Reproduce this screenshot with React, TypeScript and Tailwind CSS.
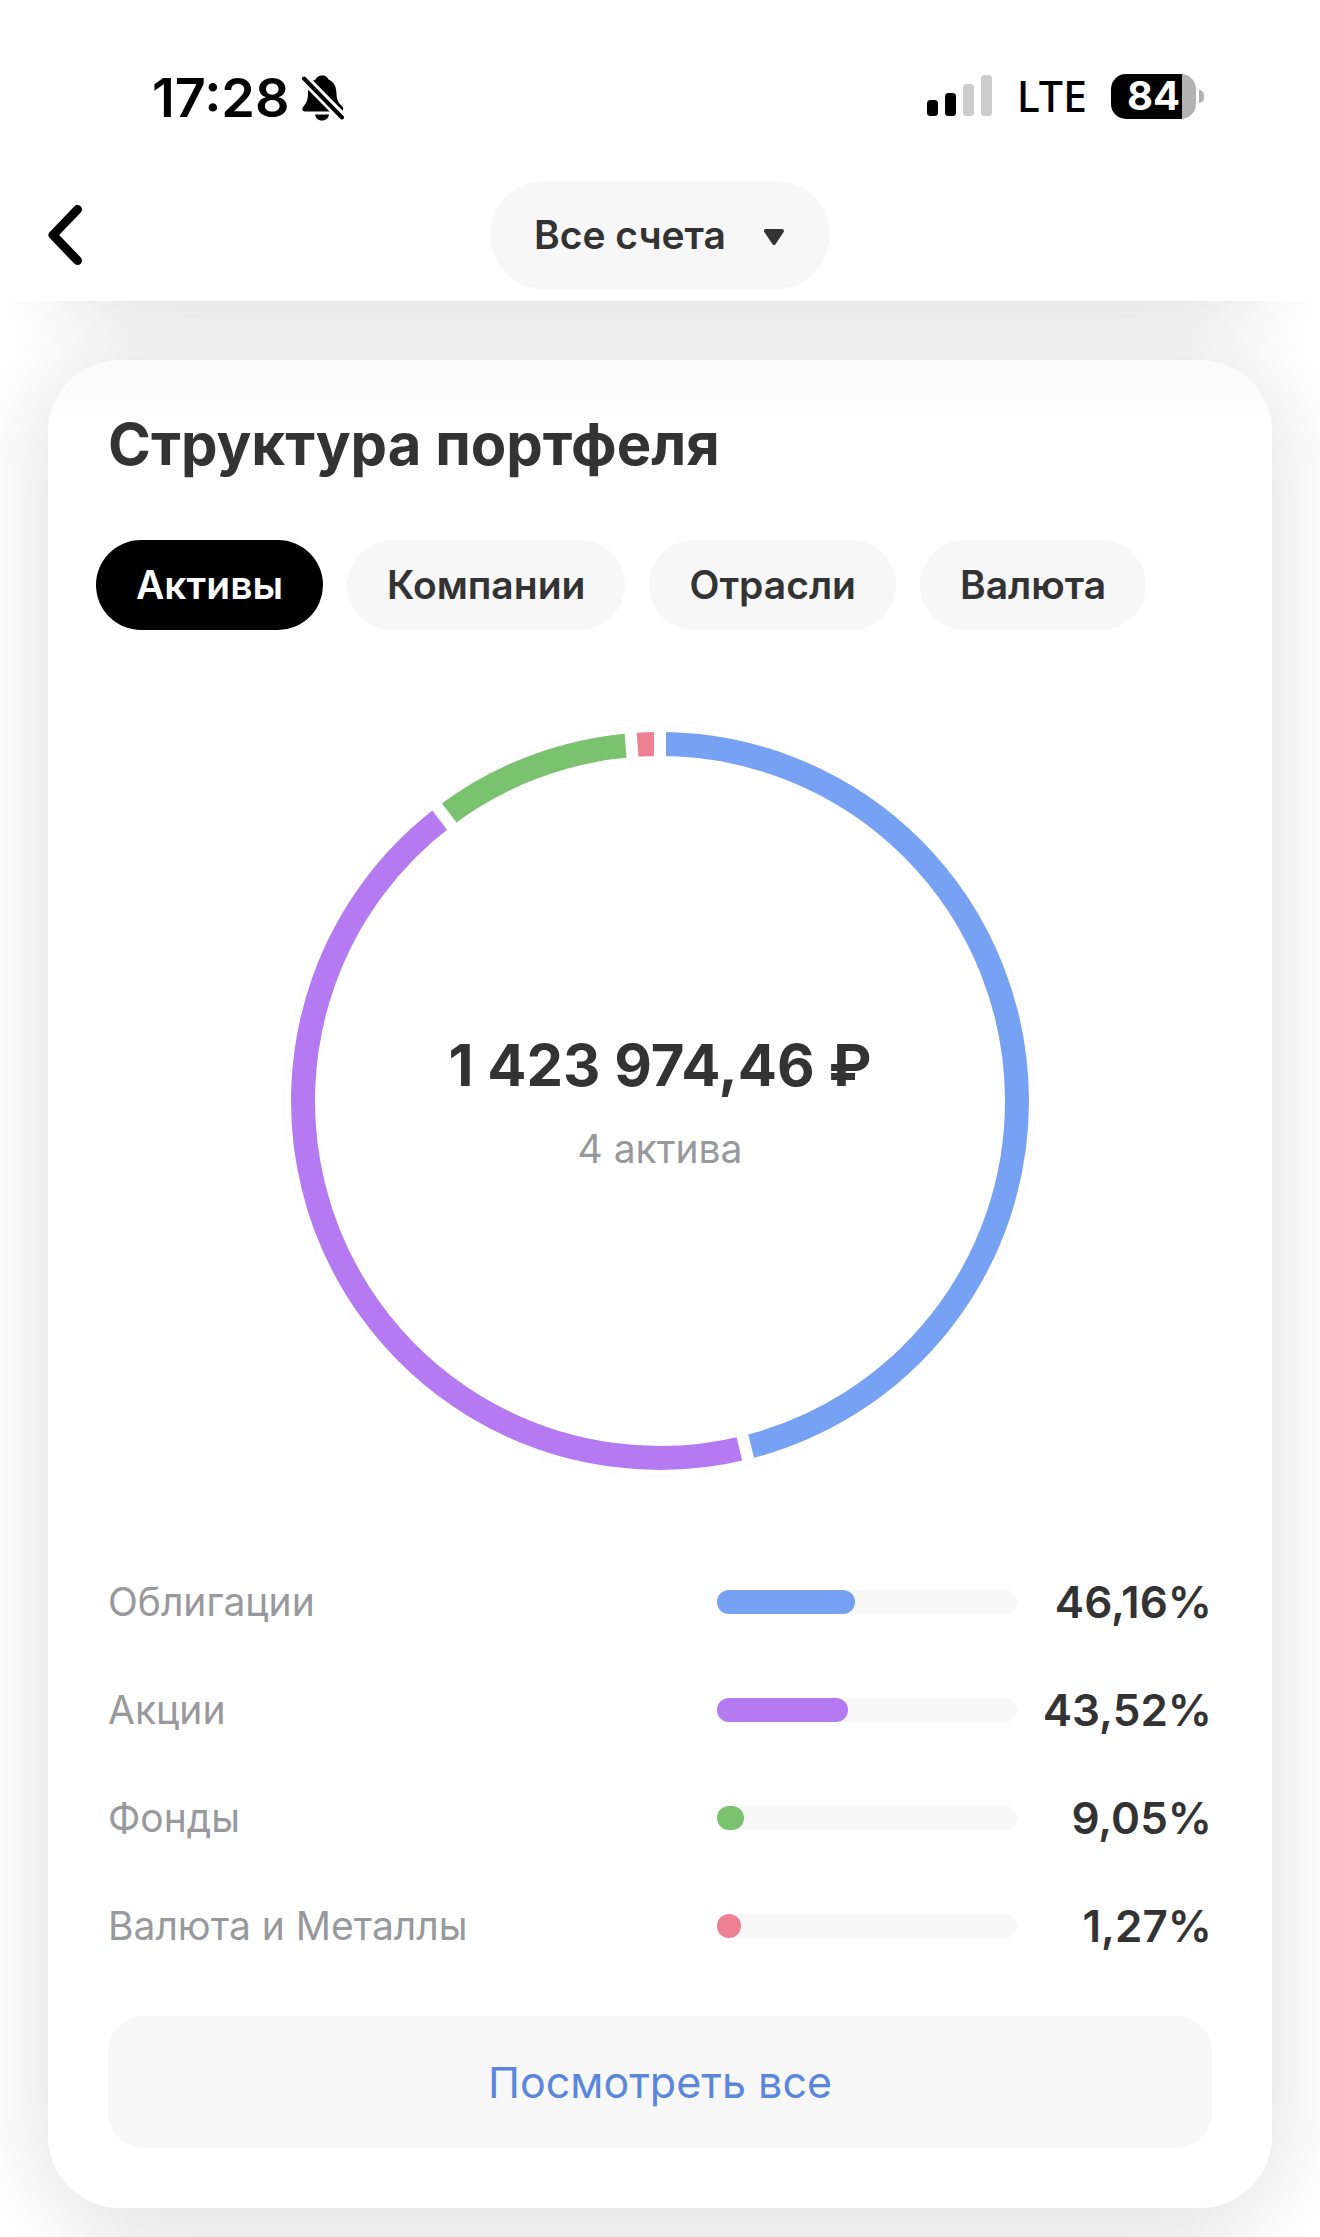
import { useState } from 'react';

const assets = [
  { name: 'Облигации', share: 46.16, label: '46,16%', bar: 'bg-[#77a2f4]', stroke: 'stroke-[#77a2f4]' },
  { name: 'Акции', share: 43.52, label: '43,52%', bar: 'bg-[#b57af2]', stroke: 'stroke-[#b57af2]' },
  { name: 'Фонды', share: 9.05, label: '9,05%', bar: 'bg-[#7bc270]', stroke: 'stroke-[#7bc270]' },
  { name: 'Валюта и Металлы', share: 1.27, label: '1,27%', bar: 'bg-[#ee8093]', stroke: 'stroke-[#ee8093]' },
];

const tabs = ['Активы', 'Компании', 'Отрасли', 'Валюта'];

export default function App() {
  const [tab, setTab] = useState('Активы');

  return (
    <div className="flex min-h-screen flex-col bg-white font-['Inter',sans-serif] text-[#333333]">
      <header className="px-12 pt-16 pb-3">
        <StatusBar />
        <nav className="mt-[53px] grid grid-cols-[1fr_auto_1fr] items-center">
          <button type="button" aria-label="Назад" className="justify-self-start">
            <BackIcon />
          </button>
          <div className="grid items-center">
            <select
              aria-label="Счет"
              className="col-start-1 row-start-1 h-[108px] w-[340px] appearance-none rounded-full bg-[#f7f7f7] pl-11 text-[39px] font-semibold outline-none"
            >
              <option>Все счета</option>
            </select>
            <svg
              width="20"
              height="16"
              viewBox="0 0 20 16"
              className="pointer-events-none col-start-1 row-start-1 mt-1 mr-[46px] justify-self-end"
              aria-hidden
            >
              <path d="M2 2 H18 L10 14 Z" fill="currentColor" stroke="currentColor" strokeWidth="4" strokeLinejoin="round" />
            </svg>
          </div>
        </nav>
      </header>

      <main className="flow-root overflow-hidden px-12">
        {/* Tail of the card scrolled under the header */}
        <div className="-mt-40 h-40 rounded-[72px] bg-white shadow-[0_8px_90px_rgba(0,0,0,0.14)]" />

        <section className="relative mt-[59px] rounded-[72px] bg-linear-to-b from-[#fbfbfb] to-white to-5% px-15 pt-12 pb-15 shadow-[0_8px_90px_rgba(0,0,0,0.14)]">
          <h1 className="text-[58px] leading-[72px] font-bold">Структура портфеля</h1>

          <div role="tablist" className="-mx-3 mt-15 flex gap-6">
            {tabs.map((t) => (
              <button
                key={t}
                type="button"
                role="tab"
                aria-selected={t === tab}
                onClick={() => setTab(t)}
                className={`h-[90px] rounded-full px-10 text-[39px] font-semibold ${
                  t === tab ? 'bg-black text-white' : 'bg-[#f7f7f7]'
                }`}
              >
                {t}
              </button>
            ))}
          </div>

          <div className="mt-[102px] grid place-items-center">
            <Donut />
            <div className="col-start-1 row-start-1 text-center">
              <div className="text-[58px] leading-[72px] font-bold">1 423 974,46 ₽</div>
              <div className="mt-6 text-[39px] leading-[48px] text-[#98999c]">4 актива</div>
            </div>
          </div>

          <ul className="mt-[78px]">
            {assets.map((a) => (
              <li key={a.name} className="flex h-[108px] items-center">
                <span className="flex-1 text-[39px] text-[#98999c]">{a.name}</span>
                <div className="h-6 w-[300px] rounded-full bg-[#f7f7f7]">
                  <div className={`h-6 min-w-6 rounded-full ${a.bar}`} style={{ width: `${a.share}%` }} />
                </div>
                <span className="w-[195px] text-right text-[44px] font-semibold">{a.label}</span>
              </li>
            ))}
          </ul>

          <button type="button" className="mt-9 h-[132px] w-full rounded-[36px] bg-[#f7f7f7] text-[43px] text-[#5a87dc]">
            Посмотреть все
          </button>
        </section>

        {/* Next card, below the fold */}
        <div className="relative mt-15 -mb-[191px] h-40 rounded-[72px] bg-white shadow-[0_8px_90px_rgba(0,0,0,0.14)]" />
      </main>
    </div>
  );
}

function StatusBar() {
  return (
    <div className="flex h-16 items-center justify-between pr-17 pl-[104px] text-black">
      <div className="flex items-center gap-3 pt-1">
        <span className="text-[54px] leading-16 font-semibold">17:28</span>
        <BellOffIcon />
      </div>
      <div className="flex items-center">
        <svg width="66" height="42" viewBox="0 0 66 42" aria-hidden>
          <rect x="0" y="25" width="11" height="16" rx="3.5" />
          <rect x="18" y="18" width="11" height="23" rx="3.5" />
          <rect x="36" y="9" width="11" height="32" rx="3.5" fill="#cccccc" />
          <rect x="54" y="0" width="11" height="41" rx="3.5" fill="#cccccc" />
        </svg>
        <span className="ml-6 font-['Noto_Sans',sans-serif] text-[43px] leading-16 font-medium">LTE</span>
        <div className="ml-6 flex items-center gap-[3px]">
          <div className="flex h-[45px] w-[85px] items-center justify-center rounded-[15px] bg-linear-to-r from-black from-84% to-[#b2b2b2] to-84% text-[40px] font-bold text-white">
            84
          </div>
          <div className="h-[13px] w-[5px] rounded-r-full bg-[#b2b2b2]" />
        </div>
      </div>
    </div>
  );
}

function Donut() {
  let sum = 0;
  const parts = assets.map((a) => {
    const start = sum;
    sum += a.share;
    return { ...a, start };
  });

  return (
    <svg width="738" height="738" viewBox="0 0 738 738" fill="none" className="col-start-1 row-start-1 overflow-visible" aria-hidden>
      <circle cx="369" cy="369" r="375" stroke="#fafafa" />
      {parts.map((p) => (
        <circle
          key={p.name}
          cx="369"
          cy="369"
          r="357"
          pathLength="100"
          strokeWidth="24"
          strokeDasharray={`${p.share} ${100 - p.share}`}
          transform={`rotate(${-90 + p.start * 3.6} 369 369)`}
          className={p.stroke}
        />
      ))}
      {/* straight gaps between the segments */}
      {parts.map((p) => (
        <path key={p.name} d="M369 -2 V28" stroke="white" strokeWidth="12" transform={`rotate(${p.start * 3.6} 369 369)`} />
      ))}
    </svg>
  );
}

function BackIcon() {
  return (
    <svg width="34" height="60" viewBox="0 0 34 60" fill="none" aria-hidden>
      <path d="M29.5 4.500 L5 30 L29.500 55.500" stroke="black" strokeWidth="9" strokeLinecap="round" strokeLinejoin="round" />
    </svg>
  );
}

function BellOffIcon() {
  return (
    <svg width="42" height="46" viewBox="0 0 42 46" aria-hidden>
      <path d="M20 .5C16.500.5 14.500 2.500 13.500 4.500C8 7 6 12 6 18C6 26 4 28 1.500 31.500C-.5 34 0 36.500 3 36.500H37.500C41 36.500 42 34 40.500 31.500C36.500 28 34.500 25 34.500 18C34 11 32 7 26.500 4.500C25.500 2.500 24 .5 20 .5Z" />
      <path d="M13 39.500H27C26.500 43 24 45.500 20 45.500S13.500 43 13 39.500Z" />
      <path d="M-1 .5L43 45" stroke="white" strokeWidth="10" />
      <path d="M2 3.500L40 42.500" stroke="black" strokeWidth="4" strokeLinecap="round" />
    </svg>
  );
}
